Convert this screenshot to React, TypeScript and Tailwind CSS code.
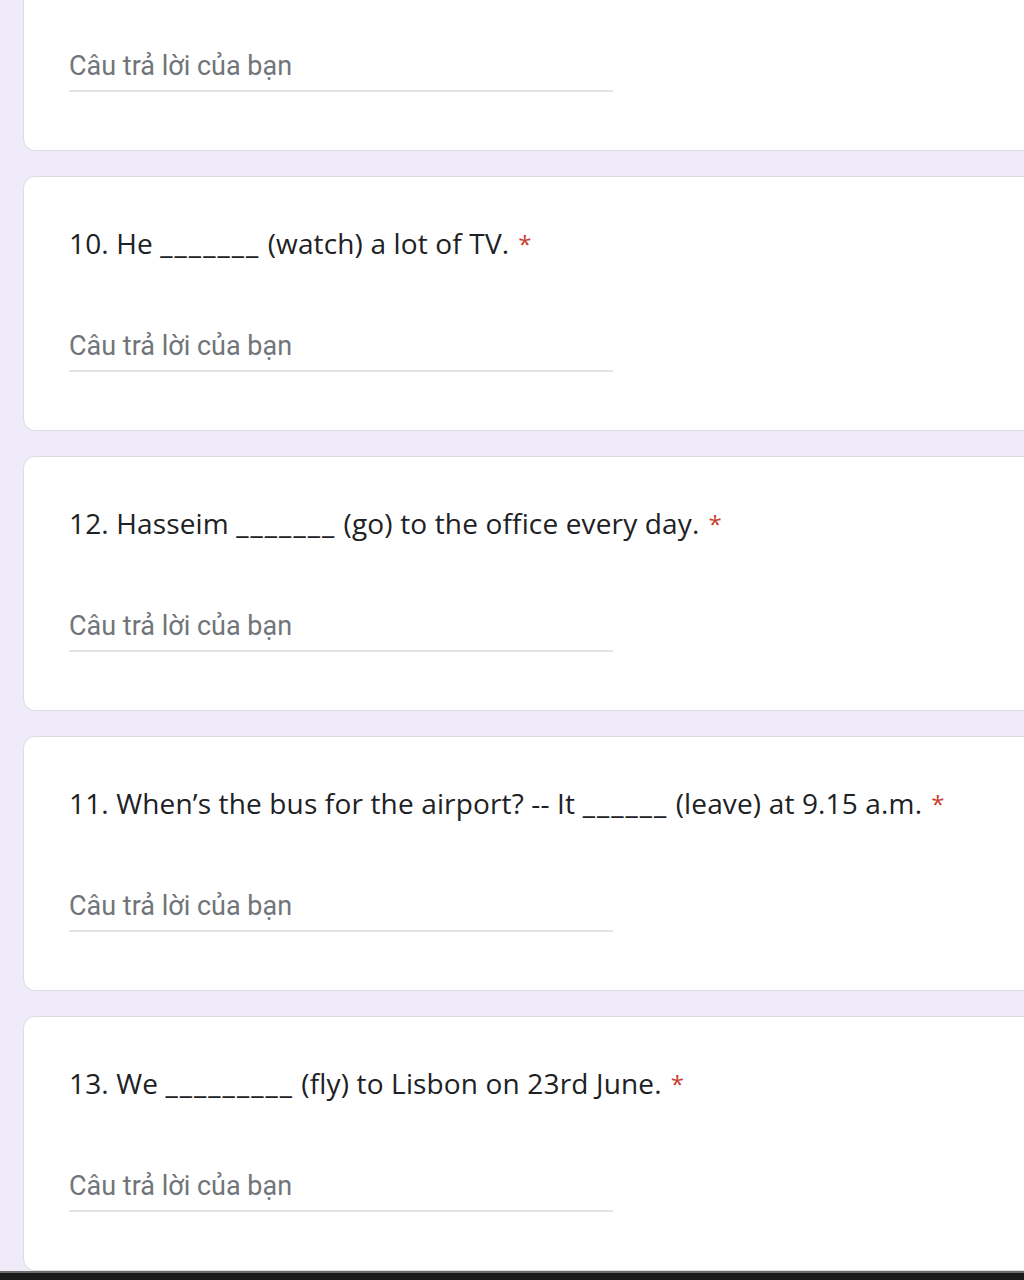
import React from "react";

const questions: { pre: string; blank: string; post: string }[] = [
  { pre: "10. He ", blank: "_______", post: " (watch) a lot of TV." },
  { pre: "12. Hasseim ", blank: "_______", post: " (go) to the office every day." },
  { pre: "11. When\u2019s the bus for the airport? -- It ", blank: "______", post: " (leave) at 9.15 a.m." },
  { pre: "13. We ", blank: "_________", post: " (fly) to Lisbon on 23rd June." },
];

function Answer() {
  return (
    <div className="w-[544px]">
      <div
        className="h-[36px] leading-[36px] text-[27px] text-[#70757a]"
        style={{ fontFamily: "Roboto, 'Noto Sans', sans-serif" }}
      >
        Câu trả lời của bạn
      </div>
      <div className="mt-[6px] h-[2px] bg-[#e3e3e6]" />
    </div>
  );
}

function Card({ children }: { children: React.ReactNode }) {
  return (
    <div className="w-[1060px] bg-white border border-[#dadce0] rounded-[12px] pl-[45px] pt-[48px] pb-[58px]">
      {children}
    </div>
  );
}

export default function App() {
  return (
    <div className="h-[1280px] w-[1024px] overflow-hidden bg-[#f0ebf8] flex flex-col">
      <div className="flex-1 overflow-hidden pl-[23px]">
        <div className="flex flex-col gap-[25px] -mt-[104px]">
          <Card>
            <div className="h-[36px]" />
            <div className="mt-[67px]">
              <Answer />
            </div>
          </Card>
          {questions.map((q, i) => (
            <Card key={i}>
              <div
                className="h-[36px] leading-[36px] text-[28px] tracking-[0.15px] text-[#202124] whitespace-nowrap"
                style={{ fontFamily: "'Open Sans', sans-serif" }}
              >
                {q.pre}
                <span className="tracking-[2px]">{q.blank}</span>
                {q.post}
                <span className="text-[#cc3b30] text-[24px] ml-[9px] align-[1px]">*</span>
              </div>
              <div className="mt-[67px]">
                <Answer />
              </div>
            </Card>
          ))}
        </div>
      </div>
      <div className="h-[9px] bg-[#1b1b1b] border-t-2 border-[#6b6b6b]" />
    </div>
  );
}
